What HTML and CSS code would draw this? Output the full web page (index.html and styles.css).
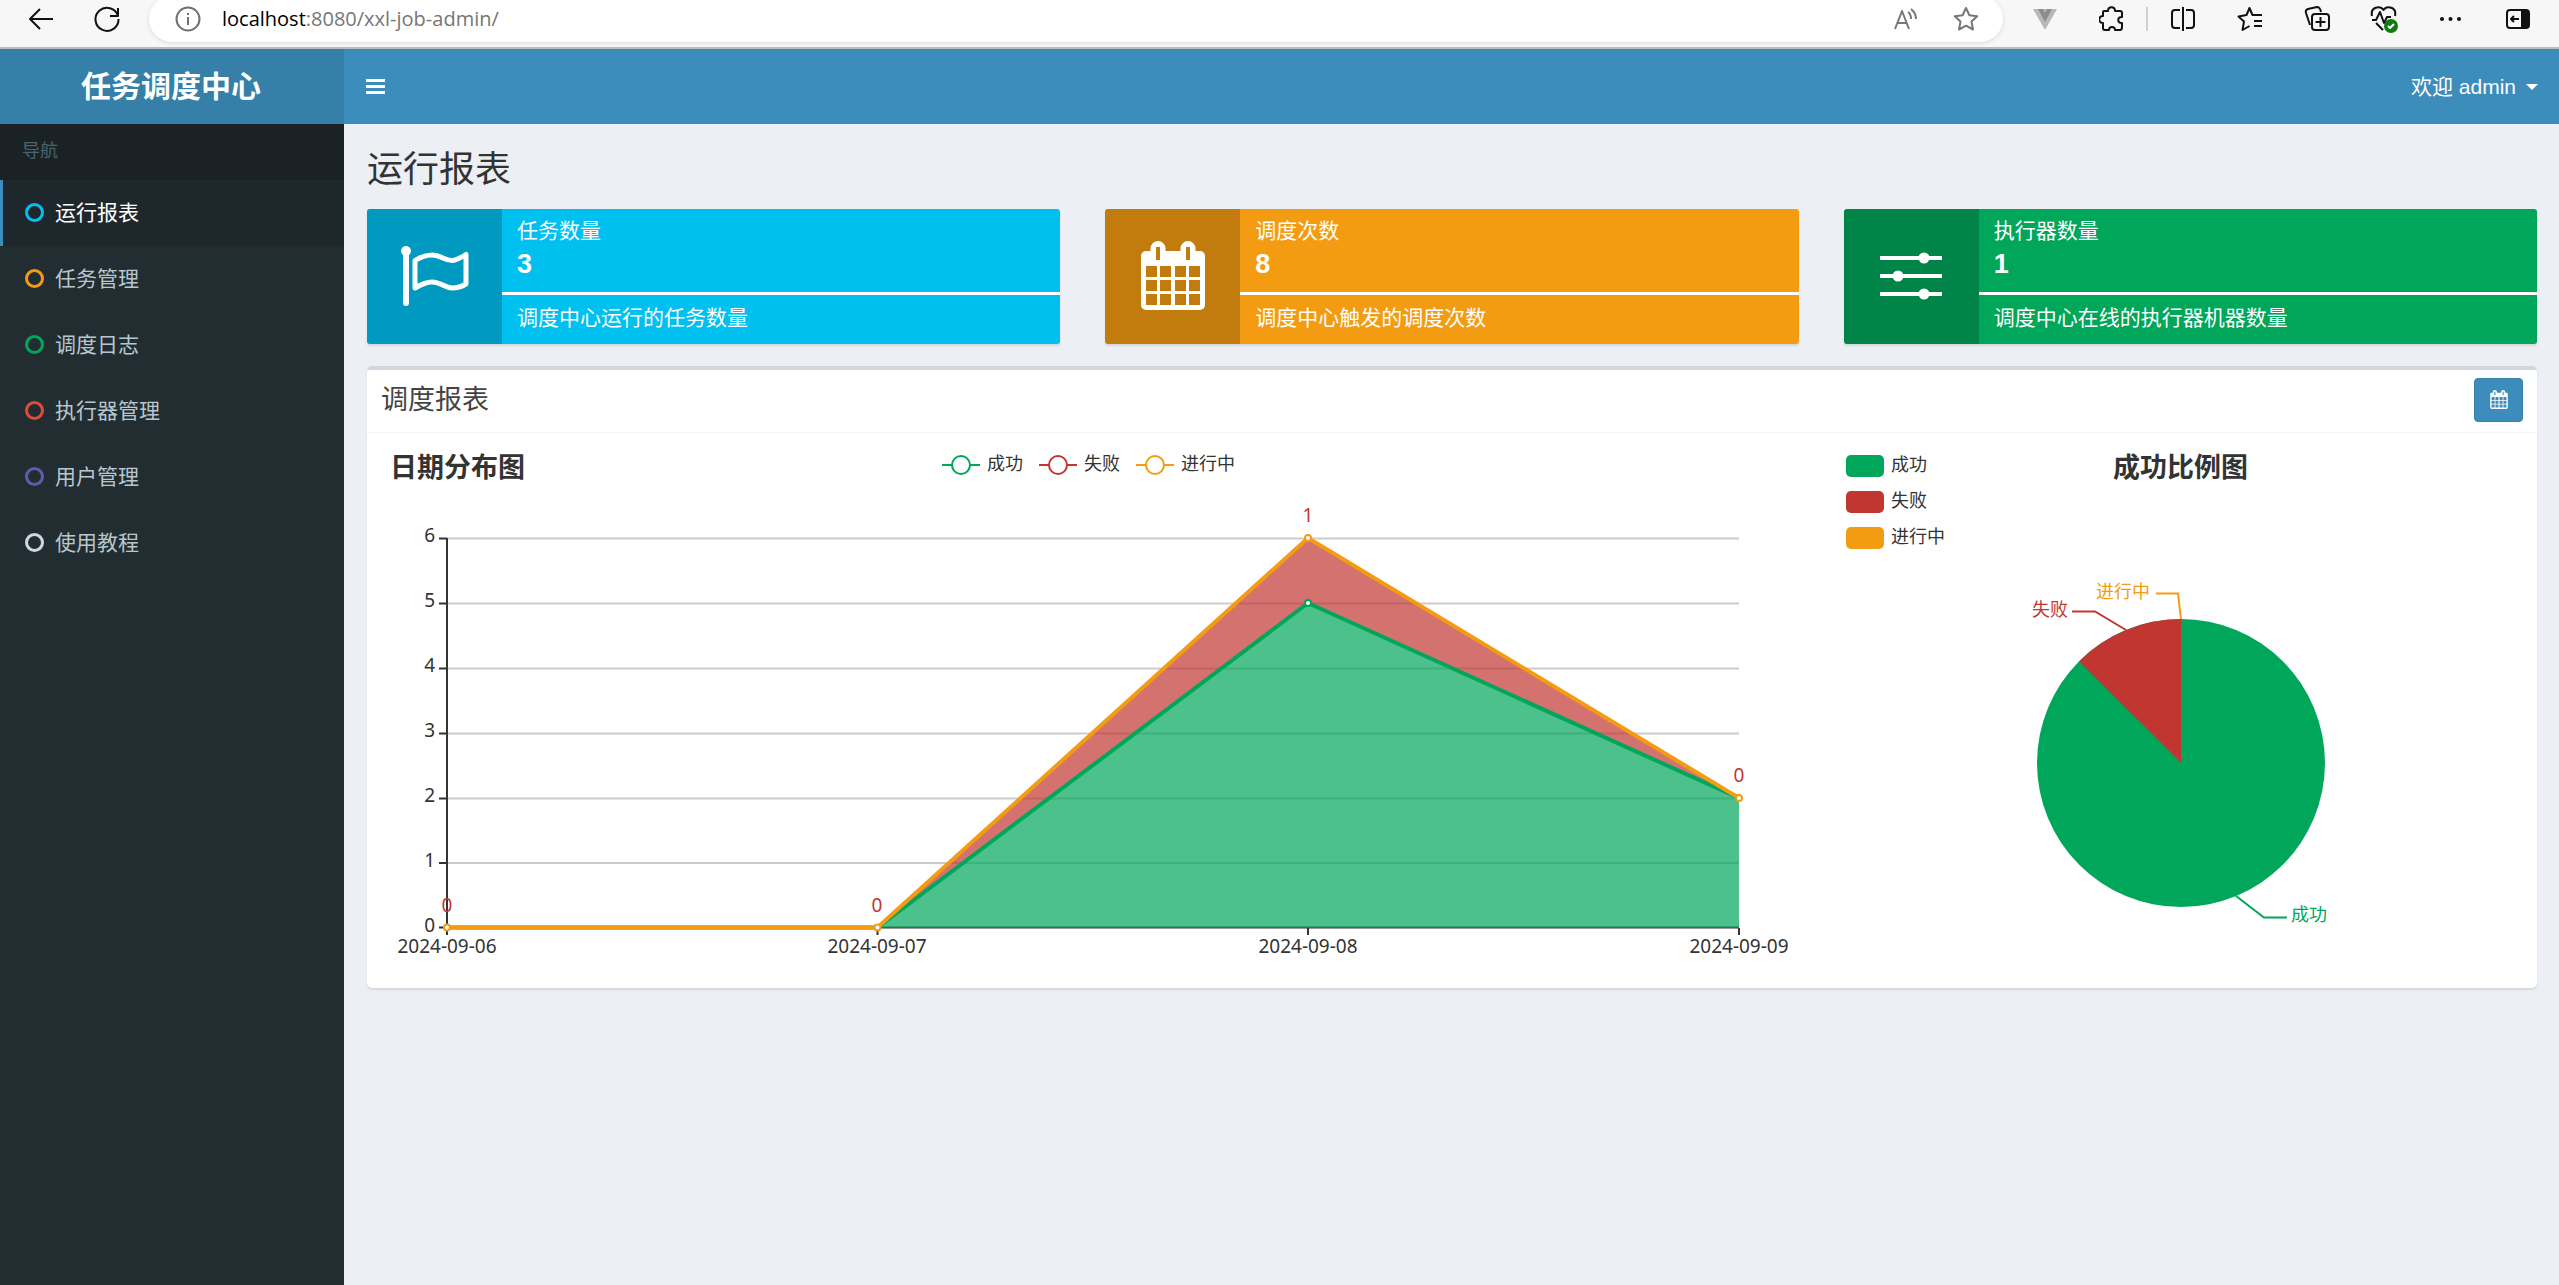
FILE: index.html
```html
<!DOCTYPE html>
<html lang="zh-CN">

<head>
    <meta charset="utf-8">
    <meta name="viewport" content="width=device-width, initial-scale=1">
    <title>任务调度中心</title>
    <link rel="stylesheet" href="styles.css">
</head>

<body>

    <svg class="symbols" aria-hidden="true">
        <symbol id="icon-calendar" viewBox="0 0 64 69">
            <path fill="currentColor" fill-rule="evenodd" d="M5 10H9.500V7.500a7.500 7.500 0 0 1 15 0V10H39.500V7.500a7.500 7.500 0 0 1 15 0V10H59a5 5 0 0 1 5 5V64a5 5 0 0 1-5 5H5a5 5 0 0 1-5-5V15a5 5 0 0 1 5-5Z
                M15 6v13h4V6ZM45 6v13h4V6Z
                M5 25v11h11V25ZM19 25v11h11V25ZM34 25v11h11V25ZM48 25v11h11V25Z
                M5 39v11h11V39ZM19 39v11h11V39ZM34 39v11h11V39ZM48 39v11h11V39Z
                M5 53v11h11V53ZM19 53v11h11V53ZM34 53v11h11V53ZM48 53v11h11V53Z" />
        </symbol>
    </svg>

    <!-- 浏览器工具栏 -->
    <div class="browser-bar">
        <button class="nav-btn" aria-label="后退">
            <svg width="26" height="24" viewBox="0 0 26 24"><path d="M25 12H2M12 2L2 12l10 10" /></svg>
        </button>
        <button class="nav-btn" aria-label="刷新">
            <svg width="26" height="26" viewBox="0 0 26 26"><path d="M24 10A11.500 11.500 0 1 0 24.500 13M24 2v8h-8" /></svg>
        </button>
        <div class="address">
            <svg class="info" width="26" height="26" viewBox="0 0 26 26"><circle cx="13" cy="13" r="11.500" /><path d="M13 11v8M13 7v2" /></svg>
            <span class="url"><b>localhost</b>:8080/xxl-job-admin/</span>
            <button class="address-btn" aria-label="朗读">
                <svg width="26" height="24" viewBox="0 0 26 24"><path d="M2 22L9 4l7 18M4 16h10M15 5q3 2 3 7M18 2q5 4 5 10" /></svg>
            </button>
            <button class="address-btn" aria-label="收藏">
                <svg width="26" height="26" viewBox="0 0 26 26"><path d="M13 2l3.400 7.200 7.800 1-5.700 5.400 1.500 7.900-7-3.800-7 3.800 1.500-7.900L1.800 10.200l7.800-1Z" /></svg>
            </button>
        </div>
        <div class="tools">
            <button aria-label="Vue">
                <svg width="26" height="24" viewBox="0 0 26 24"><path class="v-light" d="M1 2h24L13 23Z" /><path class="v-dark" d="M6 2h5l2 4 2-4h5l-7 13Z" /></svg>
            </button>
            <button aria-label="扩展">
                <svg width="26" height="26" viewBox="0 0 26 26"><path d="M5 5h4c0-5 7-5 7 0h5q2 0 2 2v4c-5 0-5 6 0 6v4q0 3-2 3h-5c0-4-6-4-6 0H6q-2 0-2-2v-5c-5 0-5-7 0-7V7q0-2 1-2Z" /></svg>
            </button>
            <span class="divider"></span>
            <button aria-label="分屏">
                <svg width="26" height="26" viewBox="0 0 26 26"><path d="M10 4H5a3 3 0 0 0-3 3v12a3 3 0 0 0 3 3h5M16 4h5a3 3 0 0 1 3 3v12a3 3 0 0 1-3 3h-5M13 1v24" /></svg>
            </button>
            <button aria-label="收藏夹">
                <svg width="26" height="26" viewBox="0 0 26 26"><path d="M17 9l-1.500 0L12.500 2 9.500 9 1.500 10.500l5.500 5L5.500 24l7-4M16 9h9M17 15h8M17 20h8" /></svg>
            </button>
            <button aria-label="集锦">
                <svg width="26" height="26" viewBox="0 0 26 26"><path d="M6 19L2 7q-1-3 2-4l9-2q3 0 4 5M11 8h11a3 3 0 0 1 3 3v10a3 3 0 0 1-3 3H11a3 3 0 0 1-3-3V11a3 3 0 0 1 3-3ZM16.500 11v10M11.500 16h10" /></svg>
            </button>
            <button aria-label="浏览器概要">
                <svg width="28" height="28" viewBox="0 0 28 28"><path d="M2 11C0 2 10 0 13.500 5 17 0 27 2 25 11M2 15h4l4-8 4 11 3-6h4M6 18l7 7" /><circle class="ok" cx="21" cy="21" r="7" /><path class="tick" d="M18 21l2 2 4-4" /></svg>
            </button>
            <button aria-label="更多">
                <svg width="26" height="26" viewBox="0 0 26 26"><g class="solid"><circle cx="4" cy="13" r="2" /><circle cx="12.500" cy="13" r="2" /><circle cx="21" cy="13" r="2" /></g></svg>
            </button>
            <button aria-label="侧边栏">
                <svg width="26" height="26" viewBox="0 0 26 26"><rect x="2" y="4" width="22" height="18" rx="3" /><path class="solid" d="M16 4h6q2 0 2 2v14q0 2-2 2h-6Z" /><path d="M14 13H6M9 10l-3 3 3 3" /></svg>
            </button>
        </div>
    </div>

    <!-- 顶部导航 -->
    <header class="main-header">
        <a class="logo" href="#">任务调度中心</a>
        <nav class="navbar">
            <button class="sidebar-toggle" aria-label="切换导航"><span></span><span></span><span></span></button>
            <button class="user-menu">欢迎 admin <i class="caret"></i></button>
        </nav>
    </header>

    <div class="wrapper">
        <!-- 左侧菜单 -->
        <aside class="main-sidebar">
            <div class="sidebar-title">导航</div>
            <ul class="sidebar-menu">
                <li class="active"><a href="#"><i class="circle aqua"></i>运行报表</a></li>
                <li><a href="#"><i class="circle yellow"></i>任务管理</a></li>
                <li><a href="#"><i class="circle green"></i>调度日志</a></li>
                <li><a href="#"><i class="circle red"></i>执行器管理</a></li>
                <li><a href="#"><i class="circle purple"></i>用户管理</a></li>
                <li><a href="#"><i class="circle gray"></i>使用教程</a></li>
            </ul>
        </aside>

        <main class="content">
            <h1>运行报表</h1>

            <!-- 统计 -->
            <section class="info-boxes">
                <div class="info-box bg-aqua">
                    <span class="info-box-icon">
                        <svg width="68" height="60" viewBox="0 0 68 60">
                            <circle cx="5" cy="5" r="5" fill="#fff" />
                            <path d="M5 5V57" stroke="#fff" stroke-width="6" stroke-linecap="round" />
                            <path d="M14 14.500C22 9.500 27 9 31 9C40 9 44 15 52 14.500C56 14 61 11 65 8.500V38C60 41 56 42 51 42C44 42 40 36 31 36C26 36 20 38.500 14 42Z" fill="none" stroke="#fff" stroke-width="5" stroke-linejoin="round" />
                        </svg>
                    </span>
                    <div class="info-box-content">
                        <span>任务数量</span>
                        <strong>3</strong>
                        <div class="progress"></div>
                        <span>调度中心运行的任务数量</span>
                    </div>
                </div>
                <div class="info-box bg-yellow">
                    <span class="info-box-icon">
                        <svg width="64" height="69"><use href="#icon-calendar" /></svg>
                    </span>
                    <div class="info-box-content">
                        <span>调度次数</span>
                        <strong>8</strong>
                        <div class="progress"></div>
                        <span>调度中心触发的调度次数</span>
                    </div>
                </div>
                <div class="info-box bg-green">
                    <span class="info-box-icon">
                        <svg width="62" height="48" viewBox="0 0 62 48" fill="#fff">
                            <path d="M0 4h62v4H0ZM0 22h62v4H0ZM0 40h62v4H0Z" />
                            <circle cx="44" cy="6" r="5.500" /><circle cx="18" cy="24" r="5.500" /><circle cx="44" cy="42" r="5.500" />
                        </svg>
                    </span>
                    <div class="info-box-content">
                        <span>执行器数量</span>
                        <strong>1</strong>
                        <div class="progress"></div>
                        <span>调度中心在线的执行器机器数量</span>
                    </div>
                </div>
            </section>

            <!-- 调度报表 -->
            <section class="box">
                <div class="box-header">
                    <h2>调度报表</h2>
                    <button class="btn-primary" aria-label="选择日期">
                        <svg width="18" height="19"><use href="#icon-calendar" /></svg>
                    </button>
                </div>
                <div class="box-body">
                    <!-- 折线图 -->
                    <div class="col-8">
                        <svg class="chart" viewBox="0 0 1412 525">
                            <text class="chart-title" x="8" y="29">日期分布图</text>

                            <g class="legend-line">
                                <g stroke="#00a65a"><path d="M560 17h38" /><circle cx="579" cy="17" r="9" /></g>
                                <g stroke="#c23632"><path d="M657 17h38" /><circle cx="676" cy="17" r="9" /></g>
                                <g stroke="#f39c12"><path d="M754 17h38" /><circle cx="773" cy="17" r="9" /></g>
                            </g>
                            <text x="605" y="22">成功</text>
                            <text x="702" y="22">失败</text>
                            <text x="799" y="22">进行中</text>

                            <path class="grid-line" d="M65 90.500H1357M65 155.500H1357M65 220.500H1357M65 285.500H1357M65 350.500H1357M65 415H1357" />
                            <path class="axis" d="M65 90V487M57 90.500h8M57 155.500h8M57 220.500h8M57 285.500h8M57 350.500h8M57 415h8M57 479.500H1357M495.500 480v7M926 480v7M1357 480v7" />

                            <g class="num end">
                                <text x="53" y="94">6</text>
                                <text x="53" y="159">5</text>
                                <text x="53" y="224">4</text>
                                <text x="53" y="289">3</text>
                                <text x="53" y="354">2</text>
                                <text x="53" y="419">1</text>
                                <text x="53" y="484">0</text>
                            </g>
                            <g class="num middle">
                                <text x="65" y="505">2024-09-06</text>
                                <text x="495" y="505">2024-09-07</text>
                                <text x="926" y="505">2024-09-08</text>
                                <text x="1357" y="505">2024-09-09</text>
                            </g>

                            <path class="area" fill="#00a65a" d="M65 480H495.500L926 155L1357 350V480Z" />
                            <path class="area" fill="#c23632" d="M495.500 480L926 90L1357 350L926 155Z" />
                            <path class="series" stroke="#00a65a" d="M65 479.500H495.500L926 155L1357 350" />
                            <path class="series" stroke="#f39c12" d="M65 479.500H495.500L926 90L1357 350" />
                            <circle class="dot" stroke="#00a65a" cx="926" cy="155" r="3" />
                            <g class="dot" stroke="#f39c12">
                                <circle cx="65" cy="479.500" r="3" />
                                <circle cx="495.500" cy="479.500" r="3" />
                                <circle cx="926" cy="90" r="3" />
                                <circle cx="1357" cy="350" r="3" />
                            </g>
                            <g class="num middle value">
                                <text x="65" y="464">0</text>
                                <text x="495" y="464">0</text>
                                <text x="926" y="74">1</text>
                                <text x="1357" y="334">0</text>
                            </g>
                        </svg>
                    </div>
                    <!-- 饼图 -->
                    <div class="col-4">
                        <svg class="chart" viewBox="0 0 684 525">
                            <text class="chart-title" x="275" y="29">成功比例图</text>

                            <rect x="8" y="7" width="38" height="22" rx="5" fill="#00a65a" />
                            <rect x="8" y="43" width="38" height="22" rx="5" fill="#c23632" />
                            <rect x="8" y="79" width="38" height="22" rx="5" fill="#f39c12" />
                            <text x="53" y="23">成功</text>
                            <text x="53" y="59">失败</text>
                            <text x="53" y="95">进行中</text>

                            <circle cx="343" cy="315" r="144" fill="#00a65a" />
                            <path fill="#c23632" d="M343 315V171A144 144 0 0 0 241.200 213.200Z" />

                            <g class="label-line">
                                <path stroke="#f39c12" d="M343 171l-3-25.500h-22" />
                                <path stroke="#c23632" d="M288 182l-31-18.500h-23" />
                                <path stroke="#00a65a" d="M398 448l28 21.500h23" />
                            </g>
                            <text class="pie-running" x="258" y="150">进行中</text>
                            <text class="pie-fail" x="194" y="168">失败</text>
                            <text class="pie-success" x="453" y="473">成功</text>
                        </svg>
                    </div>
                </div>
            </section>
        </main>
    </div>

</body>

</html>
```
FILE: styles.css
```css
* {
    box-sizing: border-box;
}

body {
    margin: 0;
    min-height: 100vh;
    display: flex;
    flex-direction: column;
    font-family: "Liberation Sans", "Noto Sans CJK SC", sans-serif;
    font-size: 21px;
    line-height: 30px;
    color: #333;
    background: #ecf0f5;
}

button {
    border: 0;
    padding: 0;
    background: none;
    font: inherit;
    color: inherit;
    cursor: pointer;
    display: flex;
    align-items: center;
    justify-content: center;
}

a {
    color: inherit;
    text-decoration: none;
}

.symbols {
    display: none;
}

/* 浏览器工具栏 */
.browser-bar {
    height: 49px;
    padding: 0 8px 10px 8px;
    display: flex;
    align-items: center;
    overflow: hidden;
    background: #f7f7f7;
    border-bottom: 2px solid #bbb;
}

.browser-bar svg {
    fill: none;
    stroke: #111;
    stroke-width: 2;
    stroke-linejoin: round;
}

.nav-btn {
    width: 66px;
    height: 37px;
}

.address {
    flex: 1;
    height: 46px;
    margin-left: 9px;
    padding: 0 24px 0 26px;
    display: flex;
    align-items: center;
    background: #fff;
    border-radius: 23px;
    box-shadow: 0 1px 4px rgba(0, 0, 0, 0.12);
}

.address .info {
    stroke: #707070;
}

.url {
    flex: 1;
    margin-left: 21px;
    font-family: "Open Sans", sans-serif;
    font-size: 20px;
    color: #767676;
}

.url b {
    font-weight: normal;
    color: #000;
}

.address-btn {
    width: 26px;
    margin-left: 34px;
}

.address-btn svg {
    stroke: #777;
}

.tools {
    display: flex;
    align-items: center;
    margin-left: 8px;
}

.tools button {
    width: 67px;
    height: 37px;
}

.divider {
    width: 2px;
    height: 24px;
    margin: 0 1px;
    background: #d0d0d0;
}

.browser-bar .v-light {
    fill: #b8b8b8;
    stroke: none;
}

.browser-bar .v-dark {
    fill: #8c8c8c;
    stroke: none;
}

.browser-bar .solid {
    fill: #111;
    stroke: none;
}

.browser-bar .ok {
    fill: #107c10;
    stroke: none;
}

.browser-bar .tick {
    stroke: #fff;
}

/* 顶部 */
.main-header {
    display: flex;
    height: 75px;
    color: #fff;
}

.logo {
    width: 344px;
    padding-right: 2px;
    font-size: 30px;
    font-weight: bold;
    line-height: 75px;
    text-align: center;
    background: #367fa9;
}

.navbar {
    flex: 1;
    padding: 0 21px 0 22px;
    display: flex;
    align-items: center;
    justify-content: space-between;
    background: #3c8dbc;
}

.sidebar-toggle {
    flex-direction: column;
    gap: 3px;
}

.sidebar-toggle span {
    width: 19px;
    height: 3px;
    background: #fff;
}

.caret {
    margin-left: 10px;
    border-top: 6px solid #fff;
    border-left: 6px solid transparent;
    border-right: 6px solid transparent;
}

.wrapper {
    flex: 1;
    display: flex;
}

/* 左侧菜单 */
.main-sidebar {
    width: 344px;
    background: #222d32;
}

.sidebar-title {
    height: 56px;
    padding-left: 22px;
    font-size: 18px;
    line-height: 54px;
    color: #4b646f;
    background: #1a2226;
}

.sidebar-menu {
    margin: 0;
    padding: 0;
    list-style: none;
}

.sidebar-menu a {
    height: 66px;
    padding: 0 0 1px 22px;
    display: flex;
    align-items: center;
    color: #b8c7ce;
    border-left: 3px solid transparent;
}

.sidebar-menu .active a {
    color: #fff;
    background: #1e282c;
    border-left-color: #3c8dbc;
}

.circle {
    width: 19px;
    height: 19px;
    margin-right: 11px;
    border: 3px solid;
    border-radius: 50%;
}

.aqua {
    color: #00c0ef;
}

.yellow {
    color: #f39c12;
}

.green {
    color: #00a65a;
}

.red {
    color: #dd4b39;
}

.purple {
    color: #605ca8;
}

.gray {
    color: #d2d6de;
}

/* 内容 */
.content {
    flex: 1;
    padding: 24px 22px 22px 23px;
}

h1 {
    margin: 0;
    font-size: 36px;
    font-weight: normal;
    line-height: 44px;
}

.info-boxes {
    display: grid;
    grid-template-columns: repeat(3, 1fr);
    gap: 45px;
    margin: 17px 0 22px;
}

.info-box {
    display: flex;
    min-height: 135px;
    color: #fff;
    border-radius: 3px;
    box-shadow: 0 2px 2px rgba(0, 0, 0, 0.1);
}

.info-box-icon {
    width: 135px;
    padding-bottom: 2px;
    display: flex;
    align-items: center;
    justify-content: center;
    background: rgba(0, 0, 0, 0.2);
    border-radius: 3px 0 0 3px;
}

.info-box-content {
    flex: 1;
    display: flex;
    flex-direction: column;
    padding: 7px 0;
}

.info-box-content span,
.info-box-content strong {
    padding-left: 15px;
}

.info-box-content strong {
    font-size: 27px;
    line-height: 36px;
}

.progress {
    height: 3px;
    margin: 10px 0 8px;
    background: #fff;
}

.bg-aqua {
    background: #00c0ef;
}

.bg-yellow {
    background: #f39c12;
}

.bg-green {
    background: #00a65a;
}

/* 报表 */
.box {
    background: #fff;
    border-top: 4px solid #d2d6de;
    border-radius: 5px;
    box-shadow: 0 2px 2px rgba(0, 0, 0, 0.1);
}

.box-header {
    height: 63px;
    padding: 0 14px 2px 14px;
    display: flex;
    align-items: center;
    justify-content: space-between;
    border-bottom: 1px solid #f4f4f4;
}

h2 {
    margin: 0;
    font-size: 27px;
    font-weight: normal;
    color: #444;
}

.btn-primary {
    width: 49px;
    height: 44px;
    padding-bottom: 2px;
    color: #fff;
    background: #3c8dbc;
    border: 1px solid #367fa9;
    border-radius: 4px;
}

.box-body {
    display: flex;
    margin: 0 -7px;
    padding: 15px 0;
}

.col-8,
.col-4 {
    padding: 0 22px;
}

.col-8 {
    width: 66.6667%;
}

.col-4 {
    width: 33.3333%;
}

/* 图表 */
.chart {
    display: block;
    width: 100%;
    height: auto;
    overflow: visible;
    font-family: "Noto Sans CJK SC", sans-serif;
    font-size: 18px;
}

.chart text {
    fill: #333;
}

.chart .chart-title {
    font-size: 27px;
    font-weight: bold;
}

.chart .num {
    font-family: "Noto Sans", sans-serif;
    font-size: 19px;
}

.end {
    text-anchor: end;
}

.middle {
    text-anchor: middle;
}

.chart .value text,
.chart .pie-fail {
    fill: #c23632;
}

.chart .pie-running {
    fill: #f39c12;
}

.chart .pie-success {
    fill: #00a65a;
}

.legend-line {
    fill: #fff;
    stroke-width: 2;
}

.grid-line {
    stroke: #ccc;
    stroke-width: 2;
}

.axis {
    fill: none;
    stroke: #333;
    stroke-width: 2;
}

.area {
    opacity: 0.7;
}

.series {
    fill: none;
    stroke-width: 4;
    stroke-linejoin: bevel;
}

.dot {
    fill: #fff;
    stroke-width: 2;
}

.label-line {
    fill: none;
    stroke-width: 2;
}
```
